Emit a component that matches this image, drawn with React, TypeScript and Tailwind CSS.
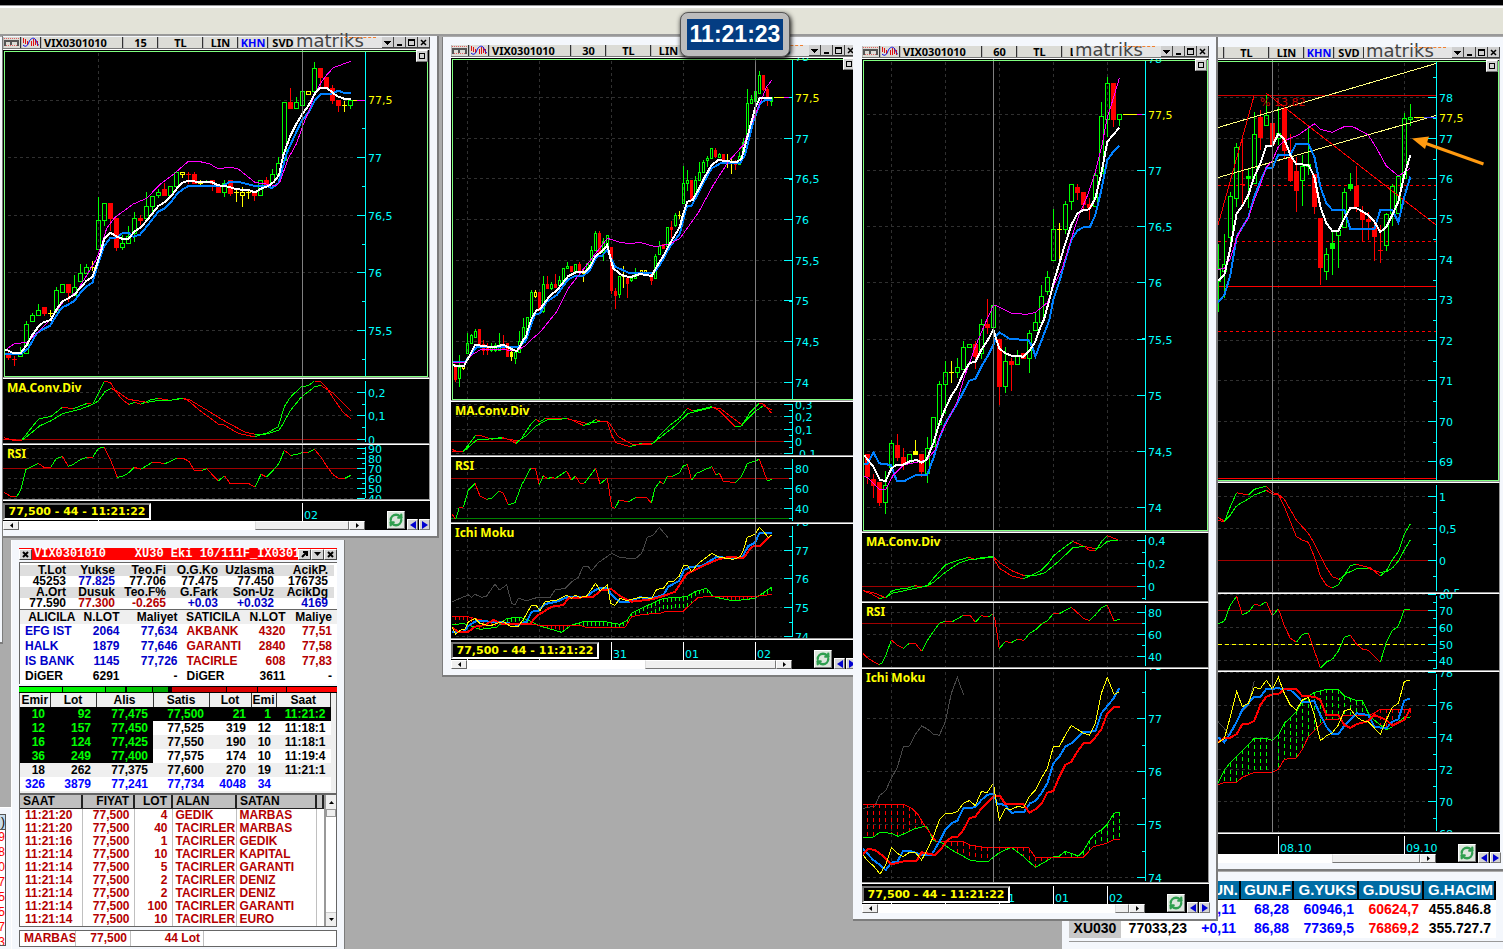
import React from 'react';
import { RefreshCw } from 'lucide-react';

type Point = [number, number];
type Level = [number, string, string?];

const GREEN = '#00ff00';
const RED = '#ff0000';
const BLUE = '#0080ff';
const MAGENTA = '#ff00ff';
const YELLOW = '#ffff00';
const CYAN = '#00ffff';

// Samples are stored at three units per pixel, relative to an origin
const at = (ox: number, oy: number, data: string): Point[] =>
  data.split(' ').map((pair) => {
    const [x, y] = pair.split(',').map(Number);
    return [ox + x / 3, oy + y / 3];
  });

const yAt = (pts: Point[], x: number) => {
  for (let i = 1; i < pts.length; i++) {
    if (x <= pts[i][0]) {
      const [x0, y0] = pts[i - 1];
      const [x1, y1] = pts[i];
      return y0 + ((y1 - y0) * (x - x0)) / (x1 - x0);
    }
  }
  return pts[pts.length - 1][1];
};

const Line: React.FC<{ pts: Point[]; color: string; width?: number }> = ({ pts, color, width = 1 }) => (
  <polyline points={pts.map((p) => p.join(',')).join(' ')} fill="none" stroke={color} strokeWidth={width} />
);

// Green while rising, red while falling
const TrendLine: React.FC<{ pts: Point[] }> = ({ pts }) => (
  <>
    {pts.slice(1).map(([x, y], i) => (
      <line key={i} x1={pts[i][0]} y1={pts[i][1]} x2={x} y2={y} stroke={y < pts[i][1] ? GREEN : RED} />
    ))}
  </>
);

const Cloud: React.FC<{ a: Point[]; b: Point[]; from: number; step: number }> = ({ a, b, from, step }) => {
  const xs: number[] = [];
  for (let x = from; x < a[a.length - 1][0]; x += step) xs.push(x + 0.5);
  return (
    <>
      {xs.map((x) => {
        const ya = yAt(a, x);
        const yb = yAt(b, x);
        return (
          <line key={x} x1={x} x2={x} y1={Math.min(ya, yb)} y2={Math.max(ya, yb)} stroke={ya < yb ? GREEN : RED} strokeDasharray="4 3" />
        );
      })}
      <Line pts={a} color={GREEN} />
      <Line pts={b} color={RED} />
    </>
  );
};

// Each entry: x, kind (g/r/y hollow or solid, G/Y filled), high, top, bottom, low
const Candles: React.FC<{ data: string; half?: number }> = ({ data, half = 2 }) => (
  <>
    {data
      .trim()
      .split(/\s*;\s*/)
      .map((entry) => {
        const [xs, kind, ...rest] = entry.split(' ');
        const x = Number(xs);
        const [high, top, bottom, low] = rest.map(Number);
        const color = kind === 'r' ? RED : kind.toLowerCase() === 'g' ? GREEN : YELLOW;
        const solid = kind === 'r' || kind === 'G' || kind === 'Y';
        return (
          <g key={x} stroke={color}>
            <path d={`M${x + 0.5} ${high}V${top}M${x + 0.5} ${bottom}V${low + 1}`} />
            {top === bottom ? (
              <path d={`M${x - half} ${top + 0.5}h${half * 2 + 1}M${x + 0.5} ${high}V${low + 1}`} />
            ) : (
              <rect x={x - half + 0.5} y={top + 0.5} width={half * 2} height={bottom - top} fill={solid ? color : 'none'} />
            )}
          </g>
        );
      })}
  </>
);

interface Frame {
  left: number;
  width: number;
  axis: number;
  grid: number[];
  cursor: number;
}

interface PanelProps {
  frame: Frame;
  top: number;
  bottom: number;
  levels: Level[];
  title?: string;
  active?: boolean;
  limits?: [number, string][];
  children: React.ReactNode;
}

const Panel: React.FC<PanelProps> = ({ frame, top, bottom, levels, title, active, limits = [], children }) => {
  const { left, width, axis, grid, cursor } = frame;
  const scale = levels.filter((l) => !l[2]);
  const half = (scale[1][0] - scale[0][0]) / 2;
  const minors = [scale[0][0] - half, ...scale.map((l) => l[0] + half)].filter((y) => y > top + 2 && y < bottom - 1);

  return (
    <div className="border-t border-r border-b border-t-white border-r-[#999999] border-b-[#999999] bg-black">
      <svg
        className="block"
        width={width}
        height={bottom - top}
        viewBox={`${left} ${top} ${width} ${bottom - top}`}
        shapeRendering="crispEdges"
      >
        <g stroke="#303030" strokeDasharray="3 3">
          {grid.map((x) => (
            <line key={x} x1={x + 0.5} x2={x + 0.5} y1={top + 3} y2={bottom} />
          ))}
          {levels.map(([y]) => (
            <line key={y} x1={left + 5} x2={axis - 10} y1={y} y2={y} />
          ))}
        </g>
        {limits.map(([y, color]) => (
          <line key={y} x1={left} x2={axis} y1={y} y2={y} stroke={color} />
        ))}
        {children}
        <line x1={cursor + 0.5} x2={cursor + 0.5} y1={top} y2={bottom} stroke="#808080" />
        <g stroke={CYAN}>
          <line x1={axis + 0.5} x2={axis + 0.5} y1={top + 2} y2={bottom - 1} />
          {scale.map(([y]) => (
            <line key={y} x1={axis - 8} x2={axis} y1={y} y2={y} />
          ))}
          {minors.map((y) => (
            <line key={y} x1={axis - 3} x2={axis} y1={y} y2={y} />
          ))}
        </g>
        {levels.map(([y, label, color]) => (
          <text key={label} x={axis + 3} y={Math.round(y) + 4} fill={color ?? CYAN} className="font-['DejaVu_Sans',sans-serif] text-[11px]">
            {label}
          </text>
        ))}
        {title && (
          <text x={left + 4} y={top + 13} fill={YELLOW} className="font-['Noto_Sans',sans-serif] text-[12px] font-bold">
            {title}
          </text>
        )}
        {active && <rect x={left + 1.5} y={top + 1.5} width={width - 2} height={bottom - top - 2} fill="none" stroke="#80ff80" />}
      </svg>
    </div>
  );
};

const titleButton = 'h-[11px] shrink-0 bg-[#dcdcd6] border-r border-[#333333] ml-px text-center';

const WindowButton: React.FC<{ label: string; children: React.ReactNode }> = ({ label, children }) => (
  <button type="button" aria-label={label} className="flex h-[11px] w-3 shrink-0 items-center justify-center border-r border-b border-[#444444] bg-[#d0d0d0]">
    <svg width="9" height="9" viewBox="0 0 9 9" shapeRendering="crispEdges" fill="none" stroke="black">
      {children}
    </svg>
  </button>
);

const TitleBar: React.FC<{ period: string }> = ({ period }) => (
  <header className="flex h-3 items-start border-b border-[#777777] bg-[#b8b8b8] font-['Noto_Sans',sans-serif] text-[11px] leading-[11px] font-bold text-black">
    <div className="flex min-w-0 flex-1 overflow-hidden">
      <button type="button" aria-label="Pencere" className={`${titleButton} w-[17px]`}>
        <svg width="16" height="11" viewBox="0 0 16 11" fill="none" shapeRendering="crispEdges">
          <path d="M0 1.500h16M0 8.500h16" stroke="#e06060" strokeDasharray="1 1" />
          <path d="M1 9V4h13v5M7 4v4" stroke="#555555" strokeWidth="2" />
        </svg>
      </button>
      <button type="button" aria-label="Grafik" className={`${titleButton} w-[19px]`}>
        <svg width="18" height="11" viewBox="0 0 18 11" fill="none">
          <path d="M1.500 1v5M3.500 2v5M5.500 4v4M9.500 4v5M11.500 2v7M13.500 2v6M15.500 4v5" stroke="#e01010" />
          <path d="M1 8c3 3 5 0 6-3s4-5 6-3 2 6 4 6" stroke="#1010e0" />
        </svg>
      </button>
      <button type="button" className={`${titleButton} w-[81px] pl-[2px] text-left`}>VIX0301010</button>
      <button type="button" className={`${titleButton} w-[34px]`}>{period}</button>
      <button type="button" className={`${titleButton} w-[44px]`}>TL</button>
      <button type="button" className={`${titleButton} w-[34px]`}>LIN</button>
      <button type="button" className={`${titleButton} w-[29px] text-[#0000ff]`}>KHN</button>
      <button type="button" className={`${titleButton} w-[29px]`}>SVD</button>
    </div>
    <div className="relative h-[11px] w-[88px] shrink-0 bg-[#e4e4e4] pl-[2px] font-['DejaVu_Sans',sans-serif] text-[18px] leading-[7px] font-normal text-[#444444]">
      matriks
      <i className="absolute top-0 left-[50px] w-[32px] border-t border-dashed border-[#f08030]" />
    </div>
    <WindowButton label="Menü"><path d="M1 3h7L4.500 7z" fill="black" stroke="none" /></WindowButton>
    <WindowButton label="Küçült"><path d="M2 7h5" strokeWidth="2" /></WindowButton>
    <WindowButton label="Büyüt"><path d="M1 2h7M1.500 1v7M7.500 1v7M1 7.500h7M1 1.500h7" /></WindowButton>
    <WindowButton label="Kapat"><path d="M2 2l5 5M7 2L2 7" strokeWidth="1.500" shapeRendering="auto" /></WindowButton>
  </header>
);

interface FooterProps {
  frame: Frame;
  ticks: [number, string][];
  thumbClass: string;
}

const arrowButton = 'flex h-[9px] w-4 shrink-0 items-center justify-center border border-t-white border-l-white border-r-[#666666] border-b-[#666666] bg-[#efefef]';
const stepButton = 'flex h-[11px] w-[11px] items-center justify-center border border-t-white border-l-white border-r-[#777777] border-b-[#777777] bg-[#d4d4d4]';

const Footer: React.FC<FooterProps> = ({ frame, ticks, thumbClass }) => (
  <footer className="flex h-[30px] items-end border-t border-white bg-black">
    <div className="relative">
      <svg className="block" width={frame.axis - frame.left} height="20" viewBox={`${frame.left} 0 ${frame.axis - frame.left} 20`} overflow="visible" shapeRendering="crispEdges">
        {frame.grid.map((x) => (
          <line key={x} x1={x + 0.5} x2={x + 0.5} y1="18" y2="20" stroke="white" />
        ))}
        {ticks.map(([x, label]) => (
          <g key={x}>
            <line x1={x + 0.5} x2={x + 0.5} y1="2" y2="20" stroke="white" />
            <text x={x + 2} y="18" fill={CYAN} className="font-['DejaVu_Sans',sans-serif] text-[11px]">{label}</text>
          </g>
        ))}
      </svg>
      <output className="absolute top-[2px] left-0 h-[17px] w-[148px] border-2 border-t-[#777777] border-r-white border-b-white border-l-[#777777] bg-black text-center font-['DejaVu_Sans',sans-serif] text-[11px] leading-[14px] font-bold whitespace-nowrap text-[#ffff00]">
        77,500 - 44 - 11:21:22
      </output>
      <div className="flex h-[9px] bg-white">
        <button type="button" aria-label="Sola kaydır" className={arrowButton}>
          <svg width="3" height="5"><path d="M3 0v5L0 2.500z" /></svg>
        </button>
        <div className="flex-1" />
        <div className={`${thumbClass} border border-t-white border-l-[#dddddd] border-r-[#777777] border-b-[#777777] bg-[#efefef]`} />
        <button type="button" aria-label="Sağa kaydır" className={arrowButton}>
          <svg width="3" height="5"><path d="M0 0v5L3 2.500z" /></svg>
        </button>
      </div>
    </div>
    <div className="ml-[22px] flex items-end gap-px">
      <button type="button" aria-label="Yenile" className="mr-px mb-px flex h-[18px] w-[18px] items-center justify-center border border-t-white border-l-white border-r-[#777777] border-b-[#777777] bg-[#dde6dd]">
        <RefreshCw className="h-[14px] w-[14px] text-[#2f9e4f]" strokeWidth={4} />
      </button>
      <button type="button" aria-label="Geri" className={stepButton}>
        <svg width="6" height="8"><path d="M6 0v8L0 4z" fill="#0000d0" /></svg>
      </button>
      <button type="button" aria-label="İleri" className={stepButton}>
        <svg width="6" height="8"><path d="M0 0v8L6 4z" fill="#0000d0" /></svg>
      </button>
    </div>
  </footer>
);

const ChartWindow: React.FC<{ className: string; period: string; children: React.ReactNode }> = ({ className, period, children }) => (
  <section className={`absolute border-r-2 border-b-2 border-l border-[#7c7c7c] bg-[#f4f7fc] ${className}`}>
    <div className="relative">
      <TitleBar period={period} />
      {children}
      <button type="button" aria-label="Paneli büyüt" className="absolute top-[13px] right-[2px] flex h-3 w-3 items-center justify-center border border-t-white border-l-white border-r-[#777777] border-b-[#777777] bg-[#d4d4d4]">
        <i className="h-[6px] w-[6px] border border-black" />
      </button>
    </div>
  </section>
);

const Chart15: React.FC = () => {
  const frame: Frame = { left: 3, width: 425, axis: 365, grid: [98], cursor: 302 };
  return (
    <ChartWindow className="top-[36px] left-[2px] w-[437px] pt-px pr-[7px] pb-[6px]" period="15">
      <Panel frame={frame} top={50} bottom={377} active levels={[[100, '77,5', YELLOW], [157.5, '77'], [215.5, '76,5'], [272.5, '76'], [330.5, '75,5']]}>
        <Candles
          data={`8 r 351 355 357 359;14 r 356 359 359 365;20 g 347 352 356 356;26 g 321 324 353 353;32 g 313 315 321 321;38 g 304 310 315 315;
          44 r 307 307 313 315;50 y 310 313 313 316;56 g 287 290 312 312;62 g 284 284 292 292;68 r 284 284 292 301;74 g 275 287 295 295;
          80 g 264 273 281 281;86 g 264 267 273 273;92 y 261 267 267 270;98 g 197 220 249 249;104 g 203 203 220 225;110 r 203 203 218 230;
          116 r 218 218 247 250;122 g 235 243 247 249;128 g 226 236 243 243;134 g 212 218 233 241;140 r 215 218 220 224;146 g 192 206 218 218;
          152 g 196 196 206 212;158 g 189 192 195 197;164 r 183 189 195 195;170 g 186 186 195 195;176 g 172 172 186 186;182 y 172 172 174 177;
          188 r 172 174 174 183;194 r 172 174 183 183;200 y 180 183 183 185;206 g 180 181 181 182;212 r 180 180 183 190;218 r 186 186 192 192;
          224 g 180 183 192 196;230 r 180 180 193 195;236 y 190 192 192 201;242 y 187 192 195 206;248 y 190 192 192 198;254 r 192 192 195 200;
          260 g 180 180 195 195;266 r 177 180 184 184;272 g 169 174 182 182;278 g 157 163 174 174;284 g 102 102 160 160;290 r 88 102 108 108;
          296 g 97 102 108 108;302 g 82 91 105 105;308 y 91 91 94 94;314 g 62 68 91 91;320 r 68 68 77 88;326 r 77 77 87 87;332 r 85 88 100 103;
          338 r 100 100 105 111;344 y 101 105 105 111;350 g 100 100 105 108`}
        />
        <Line color={BLUE} width={2} pts={[
          ...at(0, 260, '16,282 62,282 85,265 110,220 130,207 150,197 170,165 187,142 205,134 224,122 242,97 262,78 278,67 290,25'),
          ...at(0, 0, '295,790 312,740 330,715 350,712 370,698 385,698 400,710 420,704 440,680 475,635 495,625 512,608 530,583 548,568 566,558 600,557 670,557 690,545 720,547 760,557 800,558 815,564 835,550 860,460 885,405 905,362 925,338 945,300 962,283 990,283 1015,272 1030,278 1052,280'),
        ]} />
        <Line color={MAGENTA} pts={[
          ...at(0, 260, '16,270 45,250 80,248 120,210 150,180 190,125 230,95 270,30 288,0'),
          ...at(0, 0, '305,735 320,685 345,652 400,612 440,595 480,553 520,523 565,484 600,485 630,492 655,507 690,501 715,507 765,547 830,557 840,545 865,475 890,430 908,378 930,325 945,280 965,245 980,225 1000,203 1052,184'),
        ]} />
        <Line color="white" width={2} pts={[
          ...at(0, 260, '16,269 25,272 40,279 62,279 80,255 97,225 115,200 130,187 152,180 170,148 187,124 205,115 224,103 242,82 260,62 278,50 290,15'),
          ...at(0, 0, '303,755 313,715 331,698 350,710 368,717 385,717 403,695 421,683 440,662 475,618 495,606 512,590 530,566 548,548 566,542 595,546 635,546 655,556 685,560 710,568 745,570 765,577 785,565 805,558 822,545 837,525 850,465 870,410 890,370 908,340 925,318 945,280 962,263 980,263 1000,280 1015,290 1035,297 1052,298'),
        ]} />
        <path d="M353 100.500h4" stroke={YELLOW} />
        <path d="M357 100.500h8" stroke={MAGENTA} />
      </Panel>
      <Panel frame={frame} top={379} bottom={443} title="MA.Conv.Div" limits={[[439.5, '#a00000']]} levels={[[392.5, '0,2'], [415.5, '0,1'], [439.5, '0']]}>
        <TrendLine pts={at(0, 260, '12,533 40,541 65,541 85,515 115,478 135,472 152,470 187,442 220,446 262,430 278,433 313,364 331,367 350,398 368,420 387,433 405,427 422,433 450,420 475,415 510,421 540,415 560,418 600,452 655,492 672,495 715,520 765,531 783,523 800,520 835,500 853,440 872,410 905,380 925,377 943,363 960,364 978,380 1000,415 1030,458 1052,475')} />
        <TrendLine pts={at(0, 260, '12,538 65,541 90,522 120,497 152,483 190,460 240,448 278,433 295,423 315,395 333,385 350,393 385,418 440,427 470,422 510,421 550,415 570,420 620,450 680,487 735,516 765,523 800,522 837,510 850,490 870,453 905,410 943,381 962,376 1000,400 1052,452')} />
      </Panel>
      <Panel frame={frame} top={445} bottom={499} title="RSI" limits={[[468.5, '#a00000']]} levels={[[448.5, '90'], [458.5, '80'], [468.5, '70'], [478.5, '60'], [488.5, '50'], [498.5, '40']]}>
        <TrendLine pts={at(0, 260, '12,697 32,709 50,710 63,688 78,628 115,610 132,622 152,622 168,597 187,589 205,619 220,613 242,598 260,592 278,592 295,565 313,562 333,603 352,652 368,648 385,640 403,622 422,628 455,608 478,608 493,612 530,595 550,595 567,604 583,631 605,631 620,626 655,663 673,647 690,670 745,670 765,681 783,643 800,651 822,628 837,610 853,571 872,586 890,583 908,577 925,577 943,568 962,590 980,618 998,643 1015,655 1035,655 1052,646')} />
      </Panel>
      <Footer frame={frame} ticks={[[302, '02']]} thumbClass="w-[94px]" />
    </ChartWindow>
  );
};

const Chart30: React.FC = () => {
  const frame: Frame = { left: 451, width: 405, axis: 792, grid: [467, 539, 611, 683], cursor: 755 };
  return (
    <ChartWindow className="top-[37px] left-[442px] w-[424px] pt-[8px] pr-[7px] pb-[6px] pl-[8px]" period="30">
      <Panel frame={frame} top={58} bottom={400} active levels={[[57, '78'], [97.5, '77,5', YELLOW], [138.5, '77'], [178.5, '76,5'], [219.5, '76'], [260.5, '75,5'], [300.5, '75'], [341.5, '74,5'], [382.5, '74']]}>
        <Candles
          half={1}
          data={`455 r 364 365 379 381;459 g 355 367 378 386;463 y 365 365 368 369;467 g 333 343 353 353;471 g 334 335 343 343;475 g 329 331 337 337;
          479 r 329 329 344 344;483 r 340 344 350 354;487 r 343 346 350 354;491 g 343 346 350 351;495 g 343 345 350 351;499 g 333 345 350 350;503 r 335 345 349 349;
          507 r 343 343 356 356;511 Y 350 352 356 360;515 g 350 352 358 363;519 g 331 341 352 352;523 g 318 327 339 339;527 g 317 317 330 330;531 g 290 292 317 317;
          535 y 290 292 296 297;539 r 292 292 310 310;543 g 276 284 311 312;547 r 276 284 288 288;551 g 282 284 288 289;555 r 274 284 287 287;559 g 276 280 285 285;
          563 g 268 268 282 282;567 g 262 266 268 268;571 r 266 266 271 271;575 g 264 264 271 271;579 r 262 264 272 272;583 y 270 273 273 281;587 g 263 263 272 272;
          591 g 246 250 264 264;595 g 231 233 250 250;599 r 231 233 252 252;603 g 238 241 252 260;607 g 235 235 245 245;611 r 247 247 290 293;615 r 288 291 295 308;
          619 g 276 276 294 297;623 y 266 276 276 287;627 r 276 278 283 297;631 g 276 278 280 281;635 g 268 274 278 278;641 y 270 270 272 272;645 y 270 270 272 272;
          651 r 274 274 280 284;655 g 254 256 278 278;659 g 241 246 254 254;663 r 244 244 248 248;667 g 227 227 246 246;671 r 221 227 229 237;675 g 213 215 225 226;
          679 y 211 215 215 218;683 g 166 183 203 203;687 g 170 180 183 190;691 r 180 180 200 200;695 g 176 180 195 199;699 g 162 172 180 180;703 g 160 162 172 172;
          707 g 156 158 160 166;711 g 148 148 158 158;715 r 148 150 156 157;719 g 153 154 157 157;723 r 154 154 160 160;727 y 154 161 161 167;731 y 158 162 162 173;
          735 r 160 162 164 169;739 g 152 156 164 164;743 g 138 142 156 156;747 g 89 103 142 142;751 g 95 99 103 103;755 g 82 91 101 101;759 g 71 75 93 93;
          763 r 75 75 89 90;767 r 87 89 97 105;771 g 97 97 101 105`}
        />
        <Line color={BLUE} width={2} pts={[
          ...at(440, 340, '38,65 75,66 95,40 110,22 180,22 235,20 255,5'),
          ...at(440, 0, '262,1010 285,942 300,940 320,905 350,885 385,838 405,828 430,828 450,810 470,770 485,768 502,750 525,800 565,818 640,820 660,795 690,740 720,700 740,620 755,617 790,550 815,505 845,488 900,490 915,465 940,365 960,310 975,301 995,301'),
        ]} />
        <Line color={MAGENTA} pts={[
          ...at(440, 340, '38,68 75,68 95,45 120,30 170,28 230,32 255,18'),
          ...at(440, 0, '275,1018 300,997 350,935 385,865 440,795 502,715 540,727 570,731 600,727 645,740 690,732 720,715 775,638 820,555 865,485 910,435 935,370 960,310 980,260 996,240'),
        ]} />
        <Line color="white" width={2} pts={[
          ...at(440, 340, '38,73 45,77 72,77 90,45 105,15 135,18 150,22 170,20 190,14 210,25 230,34 240,20 250,0'),
          ...at(440, 0, '258,1010 265,985 275,955 290,930 300,928 320,900 335,882 350,872 385,828 410,816 435,816 450,800 467,768 485,755 502,735 510,770 520,805 545,825 570,832 600,822 635,828 650,800 672,765 690,730 720,680 730,640 742,605 758,600 775,570 795,530 815,495 835,480 890,487 905,475 925,400 945,325 960,293 995,295'),
        ]} />
        <path d="M774 97.500h10" stroke={YELLOW} />
        <path d="M784 97.500h8" stroke={MAGENTA} />
      </Panel>
      <Panel frame={frame} top={402} bottom={455} title="MA.Conv.Div" limits={[[441.5, '#a00000']]} levels={[[404.5, '0,3'], [416.5, '0,2'], [429.5, '0,1'], [441.5, '0'], [453.5, '-0,1']]}>
        <TrendLine pts={at(440, 340, '36,328 55,336 70,333 85,315 107,286 125,288 155,298 185,292 210,300 228,310 245,295 262,268 275,250 288,238 300,246 315,235 380,235 395,240 430,256 450,252 467,238 485,245 502,245 515,285 528,308 570,320 605,310 640,310 660,285 690,255 718,235 742,205 760,213 815,200 835,210 885,259 905,258 930,218 958,190 970,191 995,220')} />
        <TrendLine pts={at(440, 340, '36,333 70,335 110,300 185,294 235,303 262,285 288,258 320,240 380,236 440,250 480,245 505,245 535,290 575,312 635,312 700,262 745,220 815,203 840,205 905,254 945,215 970,197 995,210')} />
      </Panel>
      <Panel frame={frame} top={457} bottom={522} title="RSI" limits={[[478.5, '#a00000'], [518.5, '#008000']]} levels={[[468.5, '80'], [488.5, '60'], [508.5, '40']]}>
        <TrendLine pts={at(440, 340, '36,522 47,538 58,502 70,502 85,450 105,430 120,468 140,478 155,475 178,453 190,460 205,495 225,488 245,435 272,385 286,385 298,435 310,407 322,416 335,412 346,415 380,393 394,420 406,408 420,430 433,430 467,385 480,432 502,414 515,500 525,505 538,480 565,486 588,472 620,472 634,490 645,445 660,425 670,432 683,408 695,410 718,399 730,378 742,373 755,420 770,400 815,380 828,405 838,399 850,424 887,428 905,408 922,371 958,358 982,423 995,418')} />
      </Panel>
      <Panel frame={frame} top={524} bottom={638} title="Ichi Moku" levels={[[521.5, '78'], [550.5, '77'], [578.5, '76'], [607.5, '75'], [636.5, '74']]}>
        <Line color="#484848" pts={at(440, 340, '36,785 85,765 95,772 105,763 125,772 140,768 165,732 178,750 200,735 215,790 225,795 235,775 260,782 290,773 330,773 345,750 375,745 395,725 415,712 430,678 445,680 455,692 475,668 515,640 540,652 585,657 605,640 622,592 640,585 658,562 684,593')} />
        <Cloud
          from={455}
          step={4}
          a={at(440, 340, '36,855 70,850 120,868 170,862 200,835 240,832 265,840 300,858 365,877 395,855 430,845 500,846 540,853 560,842 575,820 610,802 670,775 740,770 765,755 800,745 820,770 880,783 945,775 995,742')}
          b={at(440, 340, '36,829 80,829 110,837 200,853 425,858 440,862 555,862 575,830 610,823 660,820 680,813 730,813 775,772 820,769 950,769 995,763')}
        />
        <Line color={BLUE} width={2} pts={at(440, 340, '36,875 70,877 85,858 110,842 150,845 190,847 235,855 260,845 275,815 295,812 315,792 350,785 385,770 440,770 465,750 485,743 502,745 515,765 540,786 565,786 600,772 635,775 670,765 685,740 718,722 732,690 750,682 790,676 830,650 870,655 905,655 925,618 945,608 958,580 995,578')} />
        <Line color={RED} width={2} pts={at(440, 340, '36,862 55,875 85,875 105,860 135,855 160,840 190,853 270,852 290,828 335,800 370,795 385,775 460,770 485,750 515,748 540,768 575,785 635,778 670,768 705,755 740,702 795,675 835,658 870,650 910,655 935,620 960,617 995,585')} />
        <Line color={YELLOW} pts={at(440, 340, '36,862 47,882 62,870 75,868 85,845 105,835 120,850 150,858 170,850 190,845 210,858 235,858 250,838 275,795 288,795 300,812 315,785 350,780 380,765 395,775 406,765 420,772 440,768 467,730 480,752 502,735 512,790 525,796 540,775 560,782 600,772 635,775 650,748 670,745 685,725 700,725 718,708 730,678 742,676 755,695 775,670 815,640 840,652 880,658 900,650 910,630 922,592 945,583 958,562 975,580 985,592 995,585')} />
      </Panel>
      <Footer frame={frame} ticks={[[611, '31'], [683, '01'], [755, '02']]} thumbClass="w-[131px]" />
    </ChartWindow>
  );
};

const Chart60: React.FC = () => {
  const frame: Frame = { left: 862, width: 346, axis: 1145, grid: [891, 945, 999, 1053, 1107], cursor: 993 };
  return (
    <ChartWindow className="top-[37px] left-[853px] w-[365px] border-l-0 pt-[9px] pr-[7px] pb-[6px] pl-[9px]" period="60">
      <Panel frame={frame} top={59} bottom={531} active levels={[[58.5, '78'], [114.5, '77,5', YELLOW], [170.5, '77'], [226.5, '76,5'], [282.5, '76'], [339.5, '75,5'], [395.5, '75'], [451.5, '74,5'], [507.5, '74']]}>
        <Candles
          data={`867 r 454 454 476 483;873 r 474 479 485 497;879 r 482 482 502 505;885 g 471 485 502 513;891 g 440 443 467 467;897 r 434 445 457 460;
          903 r 448 457 464 469;909 g 454 454 463 463;915 Y 440 451 454 454;921 r 454 454 471 476;927 g 437 448 473 482;933 g 417 417 446 446;939 g 381 384 424 424;
          945 g 361 372 384 413;951 y 361 372 372 382;957 g 358 367 372 377;963 g 341 347 369 369;969 g 344 344 347 347;975 r 341 344 356 368;981 g 319 324 353 358;
          987 r 299 324 327 333;993 g 305 305 327 327;999 r 339 339 386 404;1005 g 347 361 386 392;1011 r 358 361 364 390;1017 g 350 356 364 364;1023 r 353 353 358 358;
          1029 g 330 333 358 372;1035 g 313 322 330 330;1041 g 285 296 322 322;1047 g 271 277 291 294;1053 g 209 229 260 260;1059 y 223 229 229 263;1065 g 201 204 229 233;
          1071 g 184 184 201 209;1077 r 184 187 192 199;1083 r 192 192 204 209;1089 r 198 204 207 219;1095 g 170 175 206 206;1101 g 102 116 173 173;1107 g 77 83 119 136;
          1113 r 83 83 119 126;1119 g 114 114 119 125`}
        />
        <Line color={BLUE} width={2} pts={[
          ...at(855, 320, '27,432 37,432 55,397 73,430 108,435 125,482 150,482 185,464 217,464 235,415 253,355 271,310 307,250 343,182 361,176 379,140 397,110 415,75 425,45 433,37 465,57 520,60 532,80 541,110 560,60'),
          ...at(855, 30, '583,870 595,808 613,755 631,690 649,630 667,602 685,592 705,590 721,555 739,480 757,390 775,365 793,348'),
        ]} />
        <Line color={MAGENTA} pts={[
          ...at(855, 320, '27,468 40,475 75,510 92,508 115,465 145,435 180,428 215,420 240,390 253,350 271,315 307,245 325,180 361,80 395,0'),
          ...at(855, 30, '405,850 415,825 422,826 470,850 515,853 540,848 577,818 595,770 620,720 640,655 670,560 700,490 720,430 740,350 757,262 775,205 793,145'),
        ]} />
        <Line color="white" width={2} pts={[
          ...at(855, 320, '27,405 55,440 75,480 92,483 108,448 122,435 145,434 165,424 185,420 200,428 215,418 235,370 253,310 271,265 289,228 307,200 325,160 343,130 361,125 379,90 397,62 415,30 433,85 451,100 469,107 505,110 523,92 541,65 553,30'),
          ...at(855, 30, '567,868 580,820 595,760 613,700 631,640 649,585 667,550 685,540 703,538 721,505 739,430 757,335 793,293'),
        ]} />
        <path d="M1123 114.500h14" stroke={YELLOW} />
        <path d="M1137 114.500h8" stroke={MAGENTA} />
      </Panel>
      <Panel frame={frame} top={533} bottom={601} title="MA.Conv.Div" limits={[[586.5, '#a00000']]} levels={[[540.5, '0,4'], [563.5, '0,2'], [586.5, '0']]}>
        <TrendLine pts={at(855, 320, '24,812 50,822 72,835 92,833 108,815 125,808 155,805 180,797 200,800 217,797 235,775 271,735 290,727 340,712 360,718 385,712 413,710 433,745 450,755 470,768 505,776 525,768 560,750 580,730 595,708 620,688 653,664 685,678 705,692 722,692 740,665 757,647 790,660')} />
        <TrendLine pts={at(855, 320, '24,812 55,818 92,833 110,820 185,804 217,798 235,787 271,757 310,730 340,720 415,711 433,727 470,752 510,768 540,767 570,758 610,725 655,682 690,680 720,686 735,683 757,664 790,660')} />
      </Panel>
      <Panel frame={frame} top={603} bottom={667} title="RSI" limits={[[623.5, '#a00000']]} levels={[[612.5, '80'], [634.5, '60'], [656.5, '40']]}>
        <TrendLine pts={at(855, 600, '24,160 38,175 72,194 80,190 92,168 109,120 125,134 145,145 163,130 181,130 200,154 217,122 235,95 253,70 271,64 292,65 325,46 345,46 361,67 379,47 400,51 413,42 420,60 433,146 451,124 469,128 487,118 507,121 523,100 541,90 560,72 577,62 595,41 613,41 649,22 667,38 685,55 703,62 721,45 740,22 757,16 777,62 795,58')} />
      </Panel>
      <Panel frame={frame} top={669} bottom={882} title="Ichi Moku" levels={[[665.5, '78'], [718.5, '77'], [771.5, '76'], [824.5, '75'], [877.5, '74']]}>
        <Line color="#484848" pts={at(855, 600, '24,625 60,618 73,587 92,572 109,535 127,502 145,440 163,438 181,403 200,378 217,387 235,402 253,406 271,365 289,280 307,232 326,285')} />
        <Cloud
          from={867}
          step={6}
          a={at(855, 600, '24,714 55,711 75,697 109,700 130,709 150,700 180,686 215,678 235,722 260,728 290,750 345,780 370,784 400,784 433,758 469,742 500,765 541,802 580,780 595,770 613,768 631,754 670,768 685,754 703,722 721,700 739,690 757,672 777,640 795,636')}
          b={at(855, 600, '24,613 145,613 170,625 190,645 210,678 230,705 245,725 325,725 345,735 385,742 520,742 541,772 685,772 715,740 755,730 777,718 795,718')}
        />
        <Line color={BLUE} width={2} pts={at(855, 600, '24,745 38,762 55,780 75,795 92,810 109,788 127,785 145,752 163,752 200,764 230,764 253,725 271,690 289,670 307,662 325,625 361,622 379,600 397,585 417,580 425,610 450,615 469,638 507,636 525,610 541,603 559,580 577,550 595,490 613,470 631,440 649,430 667,412 685,396 721,394 739,340 757,318 775,296 793,265')} />
        <Line color={RED} width={2} pts={at(855, 600, '24,762 40,747 60,750 80,765 109,793 150,783 185,782 200,757 240,765 260,745 275,722 290,712 307,712 325,690 343,655 361,650 379,625 397,608 417,588 435,588 451,612 505,613 523,638 541,628 559,612 577,578 595,573 613,530 631,495 649,485 667,455 685,430 705,428 721,412 739,388 757,340 777,321 795,321')} />
        <Line color={YELLOW} pts={at(855, 600, '24,765 40,785 55,797 75,822 92,795 109,743 127,760 145,770 163,757 181,757 200,780 217,748 235,710 253,660 271,640 290,640 307,635 325,610 343,602 361,617 379,575 397,577 415,550 433,660 451,626 469,628 487,620 507,622 523,590 541,570 559,535 577,505 595,440 613,440 631,405 649,376 667,388 685,400 703,405 721,370 739,280 757,233 777,283 793,275')} />
      </Panel>
      <Footer frame={frame} ticks={[[999, '31'], [1053, '01'], [1107, '02']]} thumbClass="w-[14px]" />
    </ChartWindow>
  );
};

const ChartDaily: React.FC = () => {
  const frame: Frame = { left: 1069, width: 430, axis: 1436, grid: [1278, 1404], cursor: 1272 };
  return (
    <ChartWindow className="top-[37px] left-[1062px] w-[448px] pt-[10px] pr-[8px] pb-[6px] pl-[6px]" period="240">
      <Panel
        frame={frame}
        top={60}
        bottom={481}
        active
        limits={[[95.5, '#d00000'], [286.5, RED], [478.5, RED]]}
        levels={[[97.5, '78'], [118, '77,5', YELLOW], [138.5, '77'], [178.5, '76'], [218.5, '75'], [259.5, '74'], [299.5, '73'], [340.5, '72'], [380.5, '71'], [421.5, '70'], [461.5, '69']]}
      >
        <path d="M1218 185.500h218M1218 241.500h218M1218 331.500h218" stroke={RED} strokeDasharray="3 3" />
        <Candles
          data={`1218 g 244 268 281 311;1224 g 234 264 271 297;1230 g 192 196 237 243;1236 g 143 147 198 206;1242 r 139 184 184 203;1248 G 168 176 178 207;
          1254 g 112 134 183 183;1260 r 110 117 137 149;1266 g 95 115 125 125;1272 r 123 123 144 144;1278 g 107 133 138 144;1284 r 108 108 150 157;1290 r 134 158 180 181;
          1296 r 157 171 190 211;1302 g 155 166 180 205;1308 g 127 164 166 174;1314 r 174 174 206 213;1320 r 218 218 267 284;1326 g 248 254 271 279;1332 G 232 243 248 274;
          1338 g 228 230 235 267;1344 g 188 192 227 227;1350 G 173 184 188 190;1356 r 166 186 206 211;1362 r 206 212 219 241;1368 r 212 219 221 239;1374 r 222 227 236 260;
          1380 r 225 250 250 262;1386 g 213 214 245 250;1392 g 184 186 213 225;1398 g 176 176 213 213;1404 g 113 118 178 178;1410 g 104 117 119 125`}
        />
        <path d="M1218 127.500L1436 63.500M1218 177.500L1436 115.500" stroke="#ffff80" />
        <path d="M1218 225L1254 96M1266 93L1436 225" stroke={RED} />
        <text x="1260" y="106" fill="#d00000" className="font-['DejaVu_Sans',sans-serif] text-[11px]">% 13,82</text>
        <Line color={BLUE} width={2} pts={at(1210, 30, '24,817 43,795 61,735 80,620 115,562 133,500 151,455 169,414 187,414 205,374 241,374 259,341 295,341 313,380 331,470 349,520 367,540 403,540 421,597 493,597 511,540 547,540 565,577 583,500 601,440')} />
        <Line color={MAGENTA} pts={at(1210, 30, '24,718 43,716 61,685 80,625 97,590 115,565 133,510 151,465 169,412 187,392 205,350 223,332 265,315 313,281 331,298 367,307 403,290 421,288 439,295 475,315 500,355 529,408 565,438 601,415')} />
        <Line color="white" width={2} pts={at(1210, 30, '24,752 43,735 61,655 80,550 97,528 115,495 133,440 151,400 169,348 187,348 205,312 223,328 241,375 259,403 295,404 313,440 331,530 349,580 367,603 385,603 403,565 421,534 439,534 475,555 493,575 511,606 529,590 547,555 565,515 583,435 601,375')} />
        <path d="M1414 117.500h10" stroke={YELLOW} />
        <path d="M1424 117.500h12" stroke="#4040ff" />
      </Panel>
      <Panel frame={frame} top={483} bottom={592} limits={[[560.5, '#a00000']]} levels={[[496.5, '1'], [528.5, '0,5'], [560.5, '0'], [592.5, '-0,5']]}>
        <TrendLine pts={at(1210, 460, '24,180 43,186 61,140 80,98 115,105 133,88 169,78 187,98 205,102 223,140 259,230 277,240 295,247 313,290 331,348 349,375 367,384 385,375 403,345 421,317 439,313 480,323 511,348 529,332 547,300 565,275 583,222 601,192')} />
        <TrendLine pts={at(1210, 460, '24,173 43,183 61,165 80,137 115,117 133,105 169,91 187,102 205,103 223,118 259,180 295,220 313,250 349,322 367,350 387,358 410,340 439,327 475,325 511,337 529,335 547,325 565,303 583,270 601,240')} />
      </Panel>
      <Panel frame={frame} top={594} bottom={670} limits={[[610.5, '#a00000']]} levels={[[594.5, '80'], [610.5, '70'], [627.5, '60'], [644.5, '50'], [660.5, '40']]}>
        <path d="M1218 644.500h218" stroke={YELLOW} strokeDasharray="4 3" />
        <TrendLine pts={at(1210, 460, '24,491 43,484 61,435 80,409 97,464 115,457 133,433 151,436 169,425 187,468 205,446 223,497 241,535 259,547 277,523 295,520 331,624 349,606 367,598 385,573 403,532 421,526 439,552 457,567 475,571 511,606 529,547 547,512 565,499 583,448 601,447')} />
      </Panel>
      <Panel frame={frame} top={672} bottom={832} levels={[[672.5, '78'], [705.5, '76'], [737.5, '74'], [769.5, '72'], [801.5, '70'], [833.5, '68']]}>
        <Line color="#484848" pts={at(1210, 460, '24,785 43,805 55,825 100,750 115,735 133,663')} />
        <Cloud
          from={1224}
          step={6}
          a={at(1210, 460, '24,970 43,930 61,908 80,890 97,872 133,835 169,835 187,841 205,825 223,790 259,755 277,725 295,710 313,697 349,688 385,688 403,708 439,722 457,722 480,770 511,795 529,810 547,800 583,772 601,772')}
          b={at(1210, 460, '24,975 43,967 80,967 97,952 133,937 187,937 205,928 223,898 259,894 277,868 295,830 313,812 345,780 385,778 403,766 480,766 511,748 601,748')}
        />
        <Line color={BLUE} width={2} pts={at(1210, 460, '24,832 43,847 61,820 80,785 97,750 133,710 151,711 169,687 205,685 241,690 259,705 277,726 313,724 331,765 349,800 367,822 385,822 403,797 421,780 439,760 475,765 493,800 529,805 547,785 565,778 583,722 601,715')} />
        <Line color={RED} width={2} pts={at(1210, 460, '24,848 43,834 61,833 80,822 97,793 115,792 133,782 151,735 169,710 187,703 205,702 223,688 259,687 277,708 313,710 331,720 349,765 385,765 403,795 421,804 439,793 475,783 493,765 529,780 547,797 565,788 583,780 601,745')} />
        <Line color={YELLOW} pts={at(1210, 460, '24,848 43,836 61,770 80,695 97,740 115,730 133,682 151,686 169,661 187,687 205,652 223,700 241,735 259,750 277,720 295,712 313,765 331,842 349,828 367,818 385,795 403,752 421,747 439,770 457,782 475,785 511,823 529,780 547,742 565,730 583,664 601,661')} />
      </Panel>
      <Footer frame={frame} ticks={[[1278, '08.10'], [1404, '09.10']]} thumbClass="w-[88px]" />
    </ChartWindow>
  );
};

const SUMMARY: { head: boolean; cells: [string, string][] }[] = [
  { head: true, cells: [['T.Lot', ''], ['Yukse', ''], ['Teo.Fi', ''], ['O.G.Ko', ''], ['Uzlasma', ''], ['AcikP.', '']] },
  { head: false, cells: [['45253', ''], ['77.825', 'text-[#0000c8]'], ['77.706', ''], ['77.475', ''], ['77.450', ''], ['176735', '']] },
  { head: true, cells: [['A.Ort', ''], ['Dusuk', ''], ['Teo.F%', ''], ['G.Fark', ''], ['Son-Uz', ''], ['AcikDg', '']] },
  { head: false, cells: [['77.590', ''], ['77.300', 'text-[#b40000]'], ['-0.265', 'text-[#b40000]'], ['+0.03', 'text-[#0000c8]'], ['+0.032', 'text-[#0000c8]'], ['4169', 'text-[#0000c8]']] },
];

const BROKERS = [
  ['EFG IST', '2064', '77,634', 'AKBANK', '4320', '77,51'],
  ['HALK', '1879', '77,646', 'GARANTI', '2840', '77,58'],
  ['IS BANK', '1145', '77,726', 'TACIRLE', '608', '77,83'],
  ['DiGER', '6291', '-', 'DiGER', '3611', '-'],
];

const DEPTH = [
  ['10', '92', '77,475', '77,500', '21', '1', '11:21:2'],
  ['12', '157', '77,450', '77,525', '319', '12', '11:18:1'],
  ['16', '124', '77,425', '77,550', '190', '10', '11:18:1'],
  ['36', '249', '77,400', '77,575', '174', '10', '11:19:4'],
  ['18', '262', '77,375', '77,600', '270', '19', '11:21:1'],
  ['326', '3879', '77,241', '77,734', '4048', '34', ''],
];

const TRADES = [
  ['11:21:20', '77,500', '4', 'GEDIK', 'MARBAS'],
  ['11:21:20', '77,500', '40', 'TACIRLER', 'MARBAS'],
  ['11:21:16', '77,500', '1', 'TACIRLER', 'GEDIK'],
  ['11:21:14', '77,500', '10', 'TACIRLER', 'KAPITAL'],
  ['11:21:14', '77,500', '5', 'TACIRLER', 'GARANTI'],
  ['11:21:14', '77,500', '2', 'TACIRLER', 'DENIZ'],
  ['11:21:14', '77,500', '2', 'TACIRLER', 'DENIZ'],
  ['11:21:14', '77,500', '100', 'TACIRLER', 'GARANTI'],
  ['11:21:14', '77,500', '10', 'TACIRLER', 'EURO'],
];

const depthCell = (row: number, col: number) => {
  if (row === 5) return 'bg-white text-[#0000ff]';
  if (row === 0 || (row < 4 && col < 3)) return 'bg-black text-[#00ff00]';
  return row % 2 ? 'bg-white' : 'bg-[#efefef]';
};

const cornerButton = 'flex h-[11px] w-[13px] shrink-0 items-center justify-center border border-t-white border-l-white border-r-[#444444] border-b-[#444444] bg-[#d4d4d4]';

const QuoteWindow: React.FC = () => (
  <section className="absolute top-[540px] left-[11px] w-[334px] border-r border-l border-r-[#7c7c7c] border-l-white bg-[#f4f7fc] pt-2 pr-[7px] pb-4 pl-[7px] font-['Liberation_Sans',sans-serif] text-[12px] font-bold text-black">
    <header className="flex h-3 items-center bg-[#ff0000]">
      <button type="button" aria-label="Kapat" className={cornerButton}>
        <svg width="7" height="7" stroke="black" strokeWidth="2"><path d="M1 1l5 5M6 1L1 6" /></svg>
      </button>
      <h2 className="flex-1 overflow-hidden pl-[2px] font-['Liberation_Mono',monospace] text-[12px] leading-[12px] font-bold whitespace-pre text-white">
        {'VIX0301010    XU30 Eki 10/111F_IX0301('}
      </h2>
      <button type="button" aria-label="Ayır" className={cornerButton}>
        <svg width="7" height="7" stroke="black" fill="none" strokeWidth="2"><path d="M1 6l5-5M2 1h4v4" /></svg>
      </button>
      <button type="button" aria-label="Menü" className={cornerButton}>
        <svg width="7" height="4"><path d="M0 0h7L3.500 4z" /></svg>
      </button>
      <button type="button" aria-label="Kapat" className={cornerButton}>
        <svg width="7" height="7" stroke="black" strokeWidth="2"><path d="M1 1l5 5M6 1L1 6" /></svg>
      </button>
    </header>

    <div className="mt-[2px] border border-r-0 border-[#666666] bg-white pt-[2px] pr-[3px]">
      <table className="w-full table-fixed border-collapse text-right leading-[11px]">
        <colgroup>
          <col className="w-[46px]" />
          <col className="w-[49px]" />
          <col className="w-[51px]" />
          <col className="w-[52px]" />
          <col className="w-[56px]" />
          <col />
        </colgroup>
        <tbody>
          {SUMMARY.map((row, i) => (
            <tr key={i} className={`h-[11px] ${row.head ? 'bg-[#dedede]' : 'bg-white'}`}>
              {row.cells.map(([text, color], j) =>
                row.head ? (
                  <th key={j} className="p-0 font-bold whitespace-nowrap last:pr-[6px]">{text}</th>
                ) : (
                  <td key={j} className={`p-0 whitespace-nowrap last:pr-[6px] ${color}`}>{text}</td>
                ),
              )}
            </tr>
          ))}
        </tbody>
      </table>
    </div>

    <table className="w-full table-fixed border-collapse border-l border-[#666666] bg-white leading-[15px]">
      <colgroup>
        <col className="w-[58px]" />
        <col className="w-[42px]" />
        <col className="w-[58px]" />
        <col className="w-[66px]" />
        <col className="w-[42px]" />
        <col />
      </colgroup>
      <thead>
        <tr className="h-[14px] bg-[#efefef] text-right">
          {['ALICILA', 'N.LOT', 'Maliyet', 'SATICILA', 'N.LOT', 'Maliye'].map((label, i) => (
            <th key={i} className="p-0 leading-[14px] font-bold last:pr-[5px] [&:nth-child(1)]:pr-[2px] [&:nth-child(4)]:pr-[3px]">{label}</th>
          ))}
        </tr>
      </thead>
      <tbody>
        {BROKERS.map((row, i) => (
          <tr key={i} className="h-[15px]">
            {row.map((text, j) => (
              <td
                key={j}
                className={`p-0 ${j % 3 === 0 ? 'text-left' : 'text-right'} ${j === 0 ? 'pl-[5px]' : ''} ${j === 3 ? 'pl-[9px]' : ''} last:pr-[5px] ${
                  i === 3 ? '' : j < 3 ? 'text-[#0000c8]' : 'text-[#b40000]'
                }`}
              >
                {text}
              </td>
            ))}
          </tr>
        ))}
      </tbody>
    </table>

    <div className="mt-[2px] flex h-[7px] gap-px border-y border-black bg-black">
      <i className="w-[43px] bg-[#00ff00]" />
      <i className="w-[42px] bg-[#00ee00]" />
      <i className="w-[19px] bg-[#00d000]" />
      <i className="ml-px w-[25px] bg-[#00c800]" />
      <i className="mr-[3px] w-[15px] bg-[#00a800]" />
      <i className="w-[54px] bg-[#cc0000]" />
      <i className="w-[30px] bg-[#e00000]" />
      <i className="w-[28px] bg-[#f00000]" />
      <i className="flex-1 bg-[#ff0000]" />
    </div>

    <div className="border border-t-0 border-[#666666] border-b-2 bg-[#efefef] pr-[5px]">
      <table className="w-full table-fixed border-collapse text-right leading-[14px]">
        <colgroup>
          <col className="w-[30px]" />
          <col className="w-[46px]" />
          <col className="w-[57px]" />
          <col className="w-[56px]" />
          <col className="w-[42px]" />
          <col className="w-[25px]" />
          <col />
        </colgroup>
        <thead>
          <tr className="h-[14px]">
            {['Emir', 'Lot', 'Alis', 'Satis', 'Lot', 'Emi', 'Saat'].map((label, i) => (
              <th key={i} className="border-r border-[#333333] p-0 text-center leading-[14px] font-bold">{label}</th>
            ))}
          </tr>
        </thead>
        <tbody>
          {DEPTH.map((row, i) => (
            <tr key={i} className="h-[14px]">
              {row.map((text, j) => (
                <td key={j} className={`p-0 pr-[5px] whitespace-nowrap ${depthCell(i, j)}`}>{text}</td>
              ))}
            </tr>
          ))}
        </tbody>
      </table>
      <div className="h-[2px]" />
    </div>

    <div className="flex border border-t-0 border-[#666666] bg-white">
      <table className="flex-1 table-fixed border-collapse leading-[13px] text-[#b40000]">
        <colgroup>
          <col className="w-[62px]" />
          <col className="w-[52px]" />
          <col className="w-[38px]" />
          <col className="w-[64px]" />
          <col className="w-[80px]" />
          <col className="w-[7px]" />
        </colgroup>
        <thead>
          <tr className="h-[13px] bg-[#bfbfbf] text-black">
            {['SAAT', 'FIYAT', 'LOT', 'ALAN', 'SATAN', ''].map((label, i) => (
              <th key={i} className={`border-r-2 border-b border-[#222222] p-0 leading-[12px] font-bold ${i === 1 || i === 2 ? 'pr-1 text-right' : 'pl-[3px] text-left'}`}>
                {label}
              </th>
            ))}
          </tr>
        </thead>
        <tbody>
          {TRADES.map((row, i) => (
            <tr key={i} className="h-[13px]">
              {row.map((text, j) => (
                <td key={j} className={`border-r border-[#c0c0c0] p-0 whitespace-nowrap ${j === 1 || j === 2 ? 'pr-1 text-right' : 'pl-[3px]'} first:pl-[5px]`}>
                  {text}
                </td>
              ))}
              <td />
            </tr>
          ))}
        </tbody>
      </table>
      <div className="flex w-3 flex-col border-l-2 border-[#999999] bg-white">
        <button type="button" aria-label="Yukarı" className="flex h-[14px] items-center justify-center bg-[#efefef]">
          <svg width="5" height="3"><path d="M0 3h5L2.500 0z" /></svg>
        </button>
        <div className="h-2 border border-[#999999] bg-[#efefef]" />
        <div className="flex-1" />
        <button type="button" aria-label="Aşağı" className="flex h-[14px] items-center justify-center border-t border-[#cccccc] bg-[#efefef]">
          <svg width="5" height="3"><path d="M0 0h5L2.500 3z" /></svg>
        </button>
      </div>
    </div>

    <div className="mt-[3px] flex h-[17px] border border-[#666666] bg-white leading-[15px] text-[#b40000]">
      <span className="w-[56px] overflow-hidden border-r border-[#c0c0c0] pl-1">MARBAS</span>
      <span className="w-[55px] border-r border-[#c0c0c0] pr-[3px] text-right">77,500</span>
      <span className="w-[73px] border-r border-[#c0c0c0] pr-[3px] text-right">44 Lot</span>
    </div>
  </section>
);

const IndexWindow: React.FC = () => (
  <section className="absolute top-[872px] left-[1062px] w-[448px] bg-[#f4f7fc] pt-[9px] pl-[7px] font-['Liberation_Sans',sans-serif] font-bold">
    <table className="w-[427px] table-fixed border-collapse bg-white text-right text-[14px]">
      <colgroup>
        <col className="w-[52px]" />
        <col className="w-[70px]" />
        <col className="w-[49px]" />
        <col className="w-[53px]" />
        <col className="w-[65px]" />
        <col className="w-[65px]" />
        <col />
      </colgroup>
      <thead>
        <tr className="h-[18px] bg-[#006ca4] text-[15px] text-white">
          {['', 'SON', 'GUN.', 'GUN.F', 'G.YUKS', 'G.DUSU', 'G.HACIM'].map((label, i) => (
            <th key={i} className="border-r-2 border-b border-black p-0 pr-px leading-[17px] font-bold">{label}</th>
          ))}
        </tr>
      </thead>
      <tbody>
        {[
          ['XU100', '60823,10', '+0,11', '68,28', '60946,1', '60624,7', '455.846.8'],
          ['XU030', '77033,23', '+0,11', '86,88', '77369,5', '76869,2', '355.727.7'],
        ].map((row) => (
          <tr key={row[0]} className="h-[19px] leading-[19px]">
            {row.map((text, j) => (
              <td
                key={j}
                className={`p-0 pr-1 whitespace-nowrap first:bg-[#c8c8c8] first:pr-0 first:text-center ${
                  j === 5 ? 'text-[#ff0000]' : j > 1 && j < 5 ? 'text-[#0000ff]' : 'text-black'
                }`}
              >
                {text}
              </td>
            ))}
          </tr>
        ))}
      </tbody>
    </table>
    <div className="mt-[3px] mb-[7px] h-px bg-[#999999]" />
    <div className="h-4 border-t border-[#aaaaaa]" />
  </section>
);

const SideWindow: React.FC = () => (
  <section className="absolute top-[807px] left-0 h-[142px] w-3 border-t border-white bg-[#f4f7fc] pt-[6px]">
    <div className="h-[132px] w-[6px] overflow-hidden border border-l-0 border-[#555555] bg-white font-['Liberation_Sans',sans-serif] text-[12px] leading-[15px] text-[#ff0000]">
      <div className="flex h-[15px] justify-end border-b border-[#555555] bg-[#c8dcec] text-black">)</div>
      {['9', '8', '0', '7', '5', '5', '7', '3'].map((digit, i) => (
        <div key={i} className="flex h-[15px] justify-end">{digit}</div>
      ))}
    </div>
  </section>
);

const App: React.FC = () => (
  <main className="relative h-screen w-full overflow-hidden bg-[#ababab]">
    <div className="h-[5px] bg-black" />
    <div className="h-[31px] border-t border-b-2 border-t-[#999999] border-b-[#999999] bg-[#e3e3d8]">
      <div className="h-[2px] bg-white" />
    </div>
    <div className="absolute top-[37px] left-0 h-[607px] w-[3px] border-r border-b-2 border-[#7c7c7c] bg-[#f4f7fc]" />
    <Chart15 />
    <Chart30 />
    <SideWindow />
    <QuoteWindow />
    <IndexWindow />
    <ChartDaily />
    <Chart60 />
    <svg className="absolute top-[130px] left-[1408px]" width="80" height="40" viewBox="1408 130 80 40">
      <path d="M1426 143.500L1483.500 164" stroke="#ff9a10" strokeWidth="3" />
      <path d="M1412 138.500L1429 136.500L1425 149z" fill="#ff9a10" />
    </svg>
    <time className="absolute top-[12px] left-[680px] rounded-lg border border-[#555555] bg-[#bcbcbc] p-[6px] font-['Liberation_Sans',sans-serif] text-[23px] leading-[31px] font-bold text-white shadow-[1px_2px_5px_#000000]">
      <span className="block w-[96px] bg-[#043d82] text-center">11:21:23</span>
    </time>
  </main>
);

export default App;
